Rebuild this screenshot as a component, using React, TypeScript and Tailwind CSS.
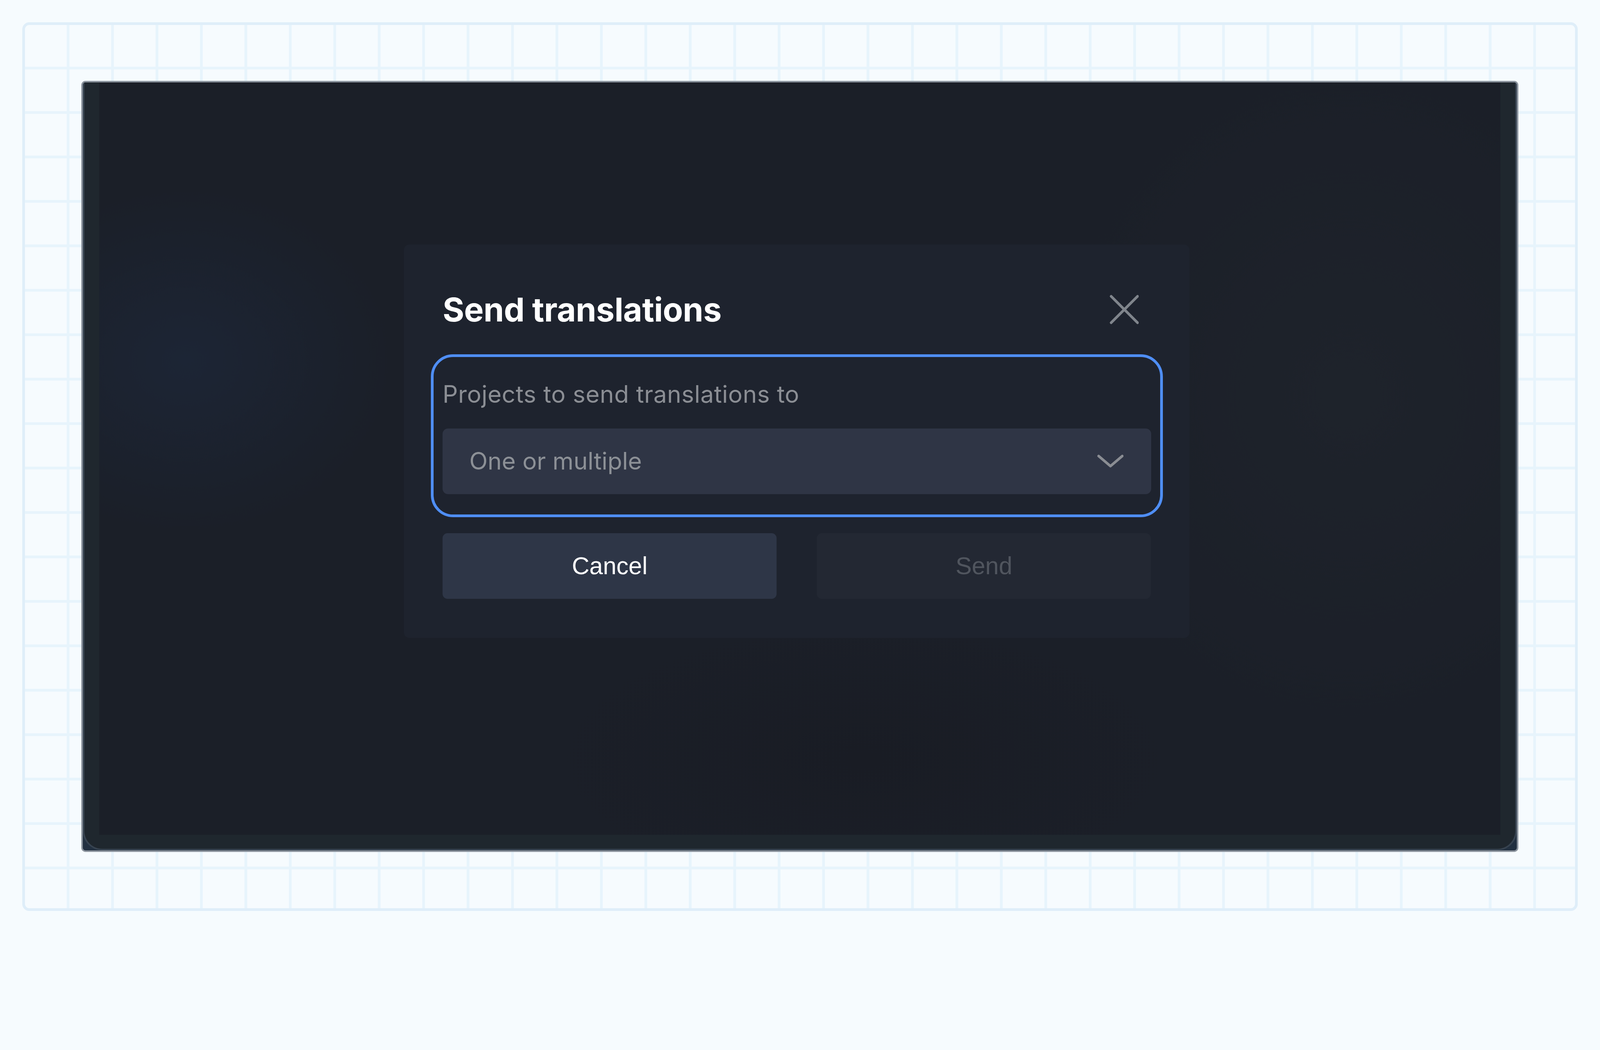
import React from "react";

function CloseIcon() {
  return (
    <svg width="74.67" height="74.67" viewBox="0 0 84 84" fill="none" className="block">
      <line x1="4" y1="4" x2="80" y2="80" stroke="#80858c" strokeWidth="7.5" strokeLinecap="round" />
      <line x1="80" y1="4" x2="4" y2="80" stroke="#80858c" strokeWidth="7.5" strokeLinecap="round" />
    </svg>
  );
}

function ChevronDown() {
  return (
    <svg width="67.56" height="35.56" viewBox="0 0 76 40" fill="none" className="block">
      <polyline points="4,5 38,34 72,5" stroke="#8a8d93" strokeWidth="7.5" strokeLinecap="round" strokeLinejoin="round" fill="none" />
    </svg>
  );
}

function Dialog() {
  return (
    <div className="relative w-[2010.7px] rounded-[14px] bg-[#1e232e] pt-[98.7px] px-[98.7px] pb-[100.4px] font-['Inter',sans-serif]">
      <div className="flex h-[135.1px] items-center justify-between">
        <h2 className="text-[84.4px] leading-none font-bold text-white tracking-[-0.44px]">Send translations</h2>
        <button className="mr-[31.1px] flex items-center justify-center">
          <CloseIcon />
        </button>
      </div>

      <div className="mt-[47.1px] -mx-[30.2px] rounded-[56.9px] border-[7.1px] border-[#4f8ef5] px-[23.1px] pt-[49.8px] pb-[51.6px]">
        <div className="text-[61.3px] leading-[91.6px] tracking-[0.6px] text-[#8b8e94]">Projects to send translations to</div>
        <div className="mt-[41.8px] flex h-[168px] items-center justify-between rounded-[14px] bg-[#2f3545] pl-[68.4px] pr-[70.2px]">
          <span className="text-[61.3px] leading-none text-[#8c9096]">One or multiple</span>
          <ChevronDown />
        </div>
      </div>

      <div className="mt-[40.9px] grid grid-cols-2 gap-[103.1px] font-['Liberation_Sans',Arial,sans-serif]">
        <button className="flex h-[168px] items-center justify-center rounded-[12.4px] bg-[#2e3647] text-[62.2px] leading-none text-white">
          Cancel
        </button>
        <button className="flex h-[168px] items-center justify-center rounded-[12.4px] bg-[#232833] text-[62.2px] leading-none text-[#50555e]">
          Send
        </button>
      </div>
    </div>
  );
}

export default function App() {
  return (
    <div className="min-h-screen w-full overflow-hidden bg-[#f6fbfe]">
      <div className="h-[2389.33px] w-[4096px] p-[56.89px]">
        <div className="h-full w-full overflow-hidden rounded-[18px] border-[7.11px] border-[#dfeef9] bg-[image:linear-gradient(to_right,transparent_106.67px,#e7f4fc_106.67px),linear-gradient(to_bottom,transparent_106.67px,#e7f4fc_106.67px)] bg-size-[113.78px_113.78px] pl-[144px] pt-[143.1px] pr-[144.9px] pb-[144px]">
          <div className="h-full w-full overflow-hidden rounded-[10.7px] border-[4.44px] border-[#8c949e] bg-[#223040]">
            <div className="h-full w-full rounded-b-[50px] border-x-[4.44px] border-b-[4.44px] border-[#374350] bg-[#1f272e] px-[38.2px] pb-[36.4px]">
              <div className="relative h-full w-full overflow-hidden bg-[#1b1f28] pl-[780.4px] pt-[415.1px] bg-[image:radial-gradient(ellipse_533px_444px_at_222px_711px,#1c2535,transparent),radial-gradient(ellipse_800px_889px_at_3200px_800px,#1e232b,transparent),radial-gradient(ellipse_800px_356px_at_1956px_1733px,#191c24,transparent)]">
                <Dialog />
              </div>
            </div>
          </div>
        </div>
      </div>
    </div>
  );
}
